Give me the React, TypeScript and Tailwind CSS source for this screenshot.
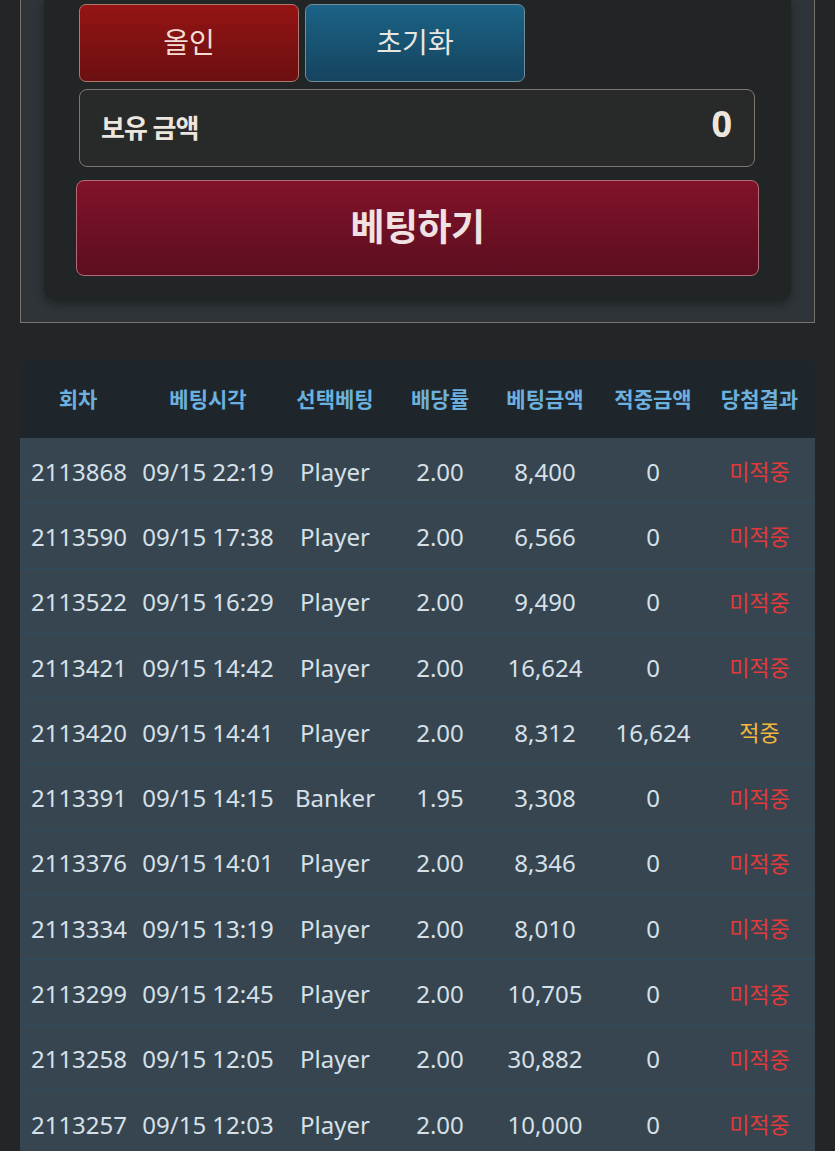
import React from "react";

interface BetRow {
  round: string;
  time: string;
  pick: string;
  odds: string;
  amount: string;
  win: string;
  hit: boolean;
}

const rows: BetRow[] = [
  { round: "2113868", time: "09/15 22:19", pick: "Player", odds: "2.00", amount: "8,400", win: "0", hit: false },
  { round: "2113590", time: "09/15 17:38", pick: "Player", odds: "2.00", amount: "6,566", win: "0", hit: false },
  { round: "2113522", time: "09/15 16:29", pick: "Player", odds: "2.00", amount: "9,490", win: "0", hit: false },
  { round: "2113421", time: "09/15 14:42", pick: "Player", odds: "2.00", amount: "16,624", win: "0", hit: false },
  { round: "2113420", time: "09/15 14:41", pick: "Player", odds: "2.00", amount: "8,312", win: "16,624", hit: true },
  { round: "2113391", time: "09/15 14:15", pick: "Banker", odds: "1.95", amount: "3,308", win: "0", hit: false },
  { round: "2113376", time: "09/15 14:01", pick: "Player", odds: "2.00", amount: "8,346", win: "0", hit: false },
  { round: "2113334", time: "09/15 13:19", pick: "Player", odds: "2.00", amount: "8,010", win: "0", hit: false },
  { round: "2113299", time: "09/15 12:45", pick: "Player", odds: "2.00", amount: "10,705", win: "0", hit: false },
  { round: "2113258", time: "09/15 12:05", pick: "Player", odds: "2.00", amount: "30,882", win: "0", hit: false },
  { round: "2113257", time: "09/15 12:03", pick: "Player", odds: "2.00", amount: "10,000", win: "0", hit: false },
];

const headers = ["회차", "베팅시각", "선택베팅", "배당률", "베팅금액", "적중금액", "당첨결과"];

const font = { fontFamily: '"Noto Sans", "Noto Sans CJK KR", sans-serif' };

export default function App() {
  return (
    <div className="min-h-[1151px] w-[835px] overflow-hidden bg-[#232526]" style={font}>
      {/* bet panel, top cut off */}
      <div className="mx-[20px] border border-t-0 border-[#76746f] bg-[#2e3437] px-[23px] pb-[22px]">
        <div className="rounded-b-[12px] bg-[#222526] px-[32px] pt-[4px] pb-[24px] shadow-[0_4px_8px_rgba(0,0,0,0.35)]">
          <div className="ml-[3px] flex gap-[6px]">
            <button className="flex h-[78px] w-[220px] items-center justify-center rounded-[7px] border border-[#b0776c] bg-gradient-to-b from-[#941414] to-[#6c0f10] pb-[2px] text-[28px] text-[#f3dcd2]">
              올인
            </button>
            <button className="flex h-[78px] w-[220px] items-center justify-center rounded-[7px] border border-[#6f8d9b] bg-gradient-to-b from-[#1b6387] to-[#15445f] pb-[2px] text-[28px] text-[#e8e6e2]">
              초기화
            </button>
          </div>
          <div className="mt-[7px] ml-[3px] mr-[4px] flex h-[78px] items-center justify-between rounded-[8px] border-[1.5px] border-[#7b7770] bg-[#282929] pl-[21px] pr-[22px]">
            <span className="text-[26px] font-bold tracking-[-1px] text-[#ece6df]">보유 금액</span>
            <span className="pb-[8px] text-[36px] font-bold text-[#ece6df]">0</span>
          </div>
          <button className="mt-[13px] flex h-[96px] w-full items-center justify-center rounded-[8px] border border-[#b36a78] bg-gradient-to-b from-[#82122a] to-[#5c0e1f] pb-[2px] text-[37px] font-bold tracking-[-0.5px] text-[#f0e2e2]">
            베팅하기
          </button>
        </div>
      </div>

      {/* bet history */}
      <div className="mx-[20px] mt-[38px] bg-[#364550]">
        <div className="grid h-[77px] grid-cols-[116px_144px_110px_100px_110px_106px_107px] items-center bg-[#1f262b] text-center text-[21px] font-bold text-[#6cb0df]">
          {headers.map(h => (
            <div key={h}>{h}</div>
          ))}
        </div>
        {rows.map(r => (
          <div
            key={r.round}
            className="grid h-[65.3px] grid-cols-[116px_144px_110px_100px_110px_106px_107px] items-center border-b border-[#2e4b5f] pt-[3px] text-center text-[24px] text-[#d6e0e8]"
          >
            <div className="pl-[2px]">{r.round}</div>
            <div>{r.time}</div>
            <div>{r.pick}</div>
            <div>{r.odds}</div>
            <div>{r.amount}</div>
            <div>{r.win}</div>
            <div className={r.hit ? "text-[22px] text-[#f2b73c]" : "text-[22px] text-[#e23a3a]"}>
              {r.hit ? "적중" : "미적중"}
            </div>
          </div>
        ))}
      </div>
    </div>
  );
}
